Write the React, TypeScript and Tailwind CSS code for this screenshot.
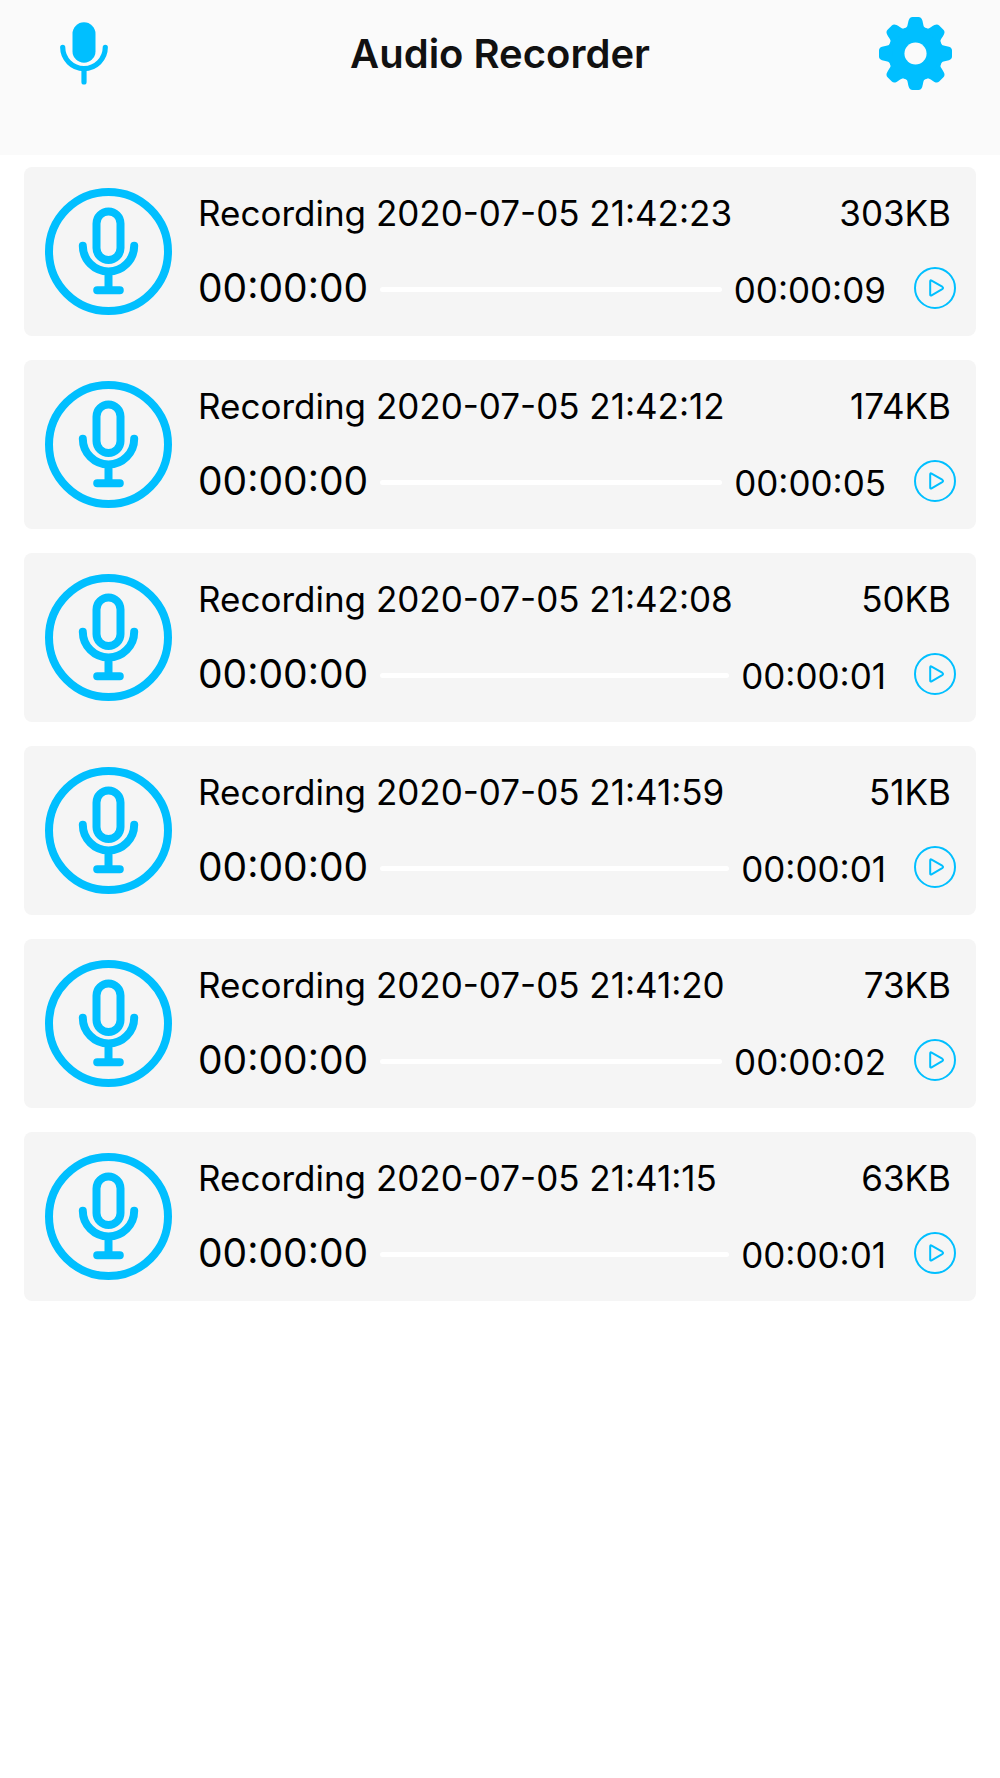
import React from 'react';

type Recording = {
    name: string;
    size: string;
    duration: string;
};

const recordings: Recording[] = [
    { name: 'Recording 2020-07-05 21:42:23', size: '303KB', duration: '00:00:09' },
    { name: 'Recording 2020-07-05 21:42:12', size: '174KB', duration: '00:00:05' },
    { name: 'Recording 2020-07-05 21:42:08', size: '50KB', duration: '00:00:01' },
    { name: 'Recording 2020-07-05 21:41:59', size: '51KB', duration: '00:00:01' },
    { name: 'Recording 2020-07-05 21:41:20', size: '73KB', duration: '00:00:02' },
    { name: 'Recording 2020-07-05 21:41:15', size: '63KB', duration: '00:00:01' },
];

const MicIcon = () => (
    <svg viewBox="0 0 48 63" className="w-12 h-[63px]" fill="none" aria-hidden="true">
        <rect x="12.5" y="0.3" width="23" height="40.4" rx="11.5" fill="currentColor" />
        <path
            d="M2.7 25.3a21.3 21.3 0 0 0 42.6 0M24 47v13"
            stroke="currentColor"
            strokeWidth="5.2"
            strokeLinecap="round"
        />
    </svg>
);

const teeth = [0, 45, 90, 135, 180, 225, 270, 315];

const GearIcon = () => (
    <svg viewBox="-109 -109 218 218" className="w-[73px] h-[73px]" fill="currentColor" aria-hidden="true">
        <circle r="80" />
        {teeth.map((angle) => (
            <path
                key={angle}
                transform={`rotate(${angle})`}
                d="M-34 -70L-38 -73L-27 -78C-23 -81 -23 -92 -20 -100Q-17 -109 -9 -109H9Q17 -109 20 -100C23 -92 23 -81 27 -78L38 -73L34 -70Z"
            />
        ))}
        <circle r="33" className="fill-[#fafafa]" />
    </svg>
);

const MicCircleIcon = () => (
    <svg
        viewBox="0 0 127 127"
        className="w-[127px] h-[127px] shrink-0 text-[#00bfff]"
        fill="none"
        stroke="currentColor"
        strokeWidth="8"
        strokeLinecap="round"
        aria-hidden="true"
    >
        <circle cx="63.5" cy="63.5" r="59.5" />
        <rect x="51.5" y="23.5" width="24" height="48.5" rx="12" />
        <path d="M37.8 57.7a25.7 25.7 0 0 0 51.4 0M63.5 84v18M52.2 102.2h22.6" />
    </svg>
);

const PlayIcon = () => (
    <svg
        viewBox="0 0 42 42"
        className="w-[42px] h-[42px]"
        fill="none"
        stroke="currentColor"
        strokeWidth="2"
        strokeLinejoin="round"
        aria-hidden="true"
    >
        <circle cx="21" cy="21" r="20" />
        <path d="M16.2 14.4q0-1.6 1.4-.8l10.6 6.1q1.7 1.2 0 2.4l-10.6 6.2q-1.4.8-1.4-.8z" />
    </svg>
);

const RecordingCard = ({ name, size, duration }: Recording) => {
    return (
        <li className="flex items-center gap-[26px] h-[169px] pl-[21px] pr-5 bg-[#f5f5f5] rounded-lg">
            <MicCircleIcon />
            <div className="flex-1 min-w-0">
                <div className="flex justify-between pr-[5px] text-[35px] leading-[48px]">
                    <h2>{name}</h2>
                    <span>{size}</span>
                </div>
                <div className="flex items-center mt-6 h-[54px]">
                    <span className="text-[39px] leading-[54px]">00:00:00</span>
                    <div className="flex flex-1 items-center min-w-0 gap-3 pt-1 pl-3">
                        <input
                            type="range"
                            min={0}
                            max={100}
                            defaultValue={0}
                            aria-label={`Position in ${name}`}
                            className="flex-1 min-w-0 h-[5px] appearance-none rounded-full bg-white [&::-webkit-slider-thumb]:appearance-none [&::-webkit-slider-thumb]:w-0"
                        />
                        <span className="text-[35px] leading-[54px]">{duration}</span>
                    </div>
                    <button type="button" aria-label={`Play ${name}`} className="ml-7 text-[#00bfff]">
                        <PlayIcon />
                    </button>
                </div>
            </div>
        </li>
    );
};

const App = () => {
    return (
        <div className="min-h-screen bg-white text-black font-['Inter',sans-serif]">
            <header className="grid grid-cols-[1fr_auto_1fr] items-center h-[155px] px-12 pb-12 bg-[#fafafa]">
                <button type="button" aria-label="Record" className="justify-self-start px-3 text-[#00bfff]">
                    <MicIcon />
                </button>
                <h1 className="text-[40px] leading-[48px] font-semibold text-[#111]">Audio Recorder</h1>
                <button type="button" aria-label="Settings" className="justify-self-end text-[#00bfff]">
                    <GearIcon />
                </button>
            </header>
            <ul className="flex flex-col gap-6 px-6 py-3">
                {recordings.map((recording) => (
                    <RecordingCard key={recording.name} {...recording} />
                ))}
            </ul>
        </div>
    );
};

export default App;
